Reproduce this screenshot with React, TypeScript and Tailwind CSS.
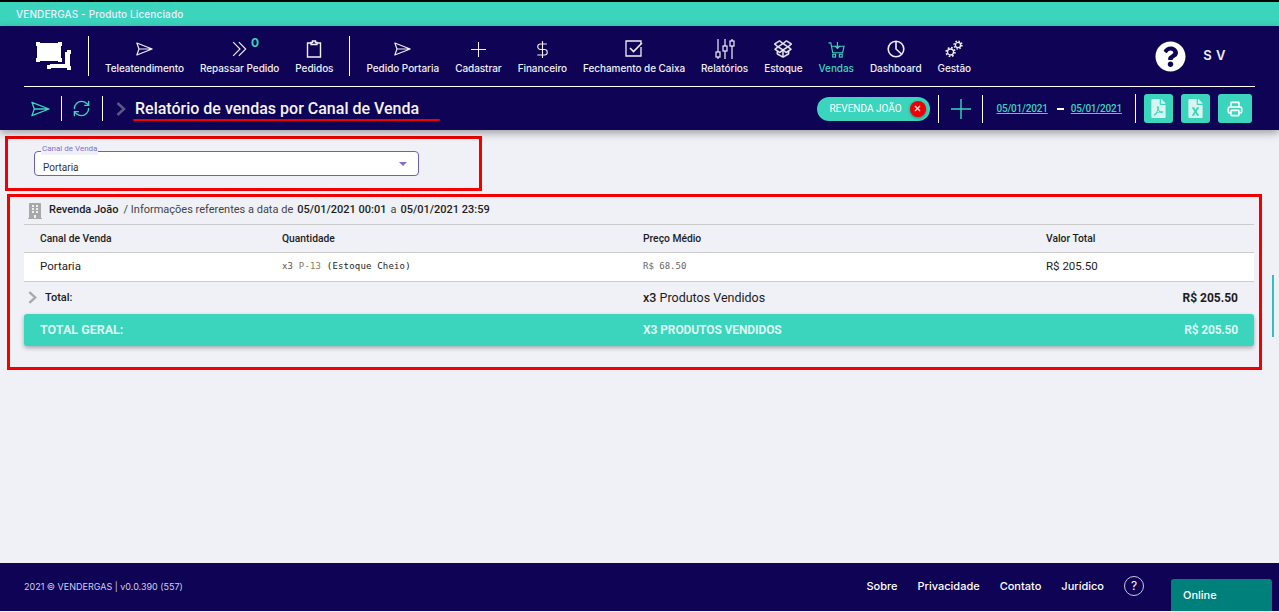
import { DollarSign, Printer, RefreshCw, X } from "lucide-react";
import type { ReactNode } from "react";
import { FaFileExcel, FaFilePdf, FaQuestionCircle, FaBuilding } from "react-icons/fa";
import { SlSocialDropbox } from "react-icons/sl";

function SendIcon({ className }: { className?: string }) {
  return (
    <svg viewBox="0 0 20 16" fill="none" stroke="currentColor" strokeWidth="1.4" className={className}>
      <path d="M1 1 L19 8 L1 15 L3.5 8 Z M3.5 8 H19" strokeLinejoin="round" />
    </svg>
  );
}

function Logo() {
  return (
    <svg viewBox="0 0 36 28" className="h-[28px] w-[36px] text-white" fill="currentColor">
      <rect x="1" y="1" width="24" height="18" />
      <rect x="0" y="0" width="4" height="4" />
      <rect x="22" y="0" width="4" height="4" />
      <rect x="0" y="16" width="4" height="4" />
      <rect x="22" y="16" width="4" height="4" />
      <path d="M14 22 H29 V10 H34 V26 H14 Z" />
      <rect x="31" y="8" width="4" height="4" />
      <rect x="31" y="24" width="4" height="4" />
      <rect x="11" y="23" width="4" height="4" />
    </svg>
  );
}

function ClipboardIcon() {
  return (
    <svg viewBox="0 0 16 18" fill="none" stroke="currentColor" strokeWidth="1.4" className="h-[18px] w-[16px]">
      <path d="M5 3 H1.5 V17 H14.5 V3 H11" />
      <path d="M5 4.5 V2.5 H6.5 V1 H9.5 V2.5 H11 V4.5 Z" />
    </svg>
  );
}

function ChevronsIcon() {
  return (
    <svg viewBox="0 0 14 14" fill="none" stroke="currentColor" strokeWidth="1" className="h-[16px] w-[16px]">
      <path d="M1 1 L7 7 L1 13 M6 1 L12 7 L6 13" />
    </svg>
  );
}

function PlusIcon({ className }: { className?: string }) {
  return (
    <svg viewBox="0 0 20 20" fill="none" stroke="currentColor" strokeWidth="1.4" className={className}>
      <path d="M10 0 V20 M0 10 H20" />
    </svg>
  );
}

function ArrowRightIcon({ className }: { className?: string }) {
  return (
    <svg viewBox="0 0 10 14" fill="none" stroke="currentColor" strokeWidth="2.6" className={className}>
      <path d="M1.5 1 L8 7 L1.5 13" />
    </svg>
  );
}

function CheckBox() {
  return (
    <svg viewBox="0 0 18 18" fill="none" stroke="currentColor" strokeWidth="1.3" className="h-[18px] w-[18px]">
      <path d="M16 4 V1 H1 V16 H16 V7" />
      <path d="M5 8 L8.5 11.5 L17 3" strokeWidth="1.6" />
    </svg>
  );
}

function SlidersIcon() {
  return (
    <svg viewBox="0 0 22 22" fill="none" stroke="currentColor" strokeWidth="1.2" className="h-[22px] w-[22px]">
      <path d="M4 1 V14 M4 19 V21 M11 1 V8 M11 13 V21 M18 1 V3 M18 8 V21" />
      <rect x="2" y="14" width="4" height="5" />
      <rect x="9" y="8" width="4" height="5" />
      <rect x="16" y="3" width="4" height="5" />
    </svg>
  );
}

function CartIcon() {
  return (
    <svg viewBox="0 0 18 18" fill="none" stroke="currentColor" strokeWidth="1.2" className="h-[17px] w-[17px]">
      <path d="M0.5 2 H3 L5 12.5 H15.5 L17 5.5 H4" />
      <path d="M10 1 V8 M7.5 5.5 L10 8 L12.5 5.5" />
      <rect x="5" y="14" width="3" height="3" />
      <rect x="12" y="14" width="3" height="3" />
    </svg>
  );
}

function PieIcon() {
  return (
    <svg viewBox="0 0 18 18" fill="none" stroke="currentColor" strokeWidth="1.6" className="h-[18px] w-[18px]">
      <circle cx="9" cy="9" r="7.8" />
      <path d="M9 1 V9 L15 14.5" />
    </svg>
  );
}

function CogsIcon() {
  return (
    <svg viewBox="0 0 18 18" fill="none" stroke="currentColor" className="h-[18px] w-[18px]">
      <circle cx="5.5" cy="12" r="3" strokeWidth="1.3" />
      <circle cx="5.5" cy="12" r="4.4" strokeWidth="1.6" strokeDasharray="1.7 1.76" />
      <circle cx="13" cy="5" r="2.6" strokeWidth="1.3" />
      <circle cx="13" cy="5" r="3.9" strokeWidth="1.5" strokeDasharray="1.5 1.56" />
    </svg>
  );
}

const NAV_LEFT: { label: string; icon: ReactNode }[] = [
  { label: "Teleatendimento", icon: <SendIcon className="h-[14px] w-[17px]" /> },
  { label: "Repassar Pedido", icon: <ChevronsIcon /> },
  { label: "Pedidos", icon: <ClipboardIcon /> },
];

const NAV_RIGHT: { label: string; icon: ReactNode; active?: boolean }[] = [
  { label: "Pedido Portaria", icon: <SendIcon className="h-[14px] w-[17px]" /> },
  { label: "Cadastrar", icon: <PlusIcon className="h-[15px] w-[15px]" /> },
  { label: "Financeiro", icon: <DollarSign className="h-[19px] w-[19px]" strokeWidth={1.4} /> },
  { label: "Fechamento de Caixa", icon: <CheckBox /> },
  { label: "Relatórios", icon: <SlidersIcon /> },
  { label: "Estoque", icon: <SlSocialDropbox className="h-[18px] w-[18px]" stroke="currentColor" strokeWidth={24} /> },
  { label: "Vendas", icon: <CartIcon />, active: true },
  { label: "Dashboard", icon: <PieIcon /> },
  { label: "Gestão", icon: <CogsIcon /> },
];

function NavItem({ label, icon, active, badge }: { label: string; icon: ReactNode; active?: boolean; badge?: string }) {
  return (
    <div className={`relative flex flex-col items-center gap-[2px] ${active ? "text-[#3bd4bc]" : "text-[#f0f0f8]"}`}>
      <div className="flex h-[22px] items-center justify-center">{icon}</div>
      <span className="whitespace-nowrap text-[10px] leading-[12px] font-medium tracking-[-0.06px]">{label}</span>
      {badge && (
        <span className="absolute top-[-1px] left-[51px] text-[12px] font-bold leading-[12px] text-[#3bd4bc]">{badge}</span>
      )}
    </div>
  );
}

const Divider = ({ className }: { className: string }) => <div className={`w-px bg-white ${className}`} />;

const TABLE_COLS = "grid grid-cols-[242px_361px_403px_1fr] items-center pl-4 pr-4";

export default function App() {
  return (
    <div className="relative flex h-[612px] w-[1279px] flex-col overflow-hidden bg-[#f0f1f7] font-['Roboto',sans-serif] text-[#1c1c1c]">
      <div className="h-[2px] bg-black" />
      <div className="flex h-[24px] items-center bg-[#3bd4bc] pl-4 font-['Inter',sans-serif] text-[10px] font-medium tracking-[0.13px] text-[#eef]">
        VENDERGAS - Produto Licenciado
      </div>

      {/* Header */}
      <header className="z-10 h-[104px] bg-[#0e0355] font-['Inter',sans-serif] shadow-[0_3px_8px_rgba(0,0,0,0.35)]">
        <div className="mx-6 flex h-[61px] items-center border-b border-white">
          <div className="ml-[12px] mr-4"><Logo /></div>
          <Divider className="h-[40px]" />
          <div className="ml-4 flex gap-4">
            {NAV_LEFT.map((n) => (
              <NavItem key={n.label} label={n.label} icon={n.icon} badge={n.label === "Repassar Pedido" ? "0" : undefined} />
            ))}
          </div>
          <Divider className="ml-4 h-[40px]" />
          <div className="ml-4 flex gap-4">
            {NAV_RIGHT.map((n) => (
              <NavItem key={n.label} {...n} />
            ))}
          </div>
          <FaQuestionCircle className="ml-auto h-[31px] w-[31px] text-white" />
          <span className="ml-[17px] mr-[29px] text-[13px] font-semibold tracking-[0.5px] text-[#f0f0f8]">S V</span>
        </div>

        <div className="relative mx-6 flex h-[43px] items-center">
          <SendIcon className="ml-[7px] h-[16px] w-[19px] text-[#3bd4bc]" />
          <Divider className="ml-[11px] h-[25px]" />
          <RefreshCw className="ml-[10px] h-[19px] w-[19px] text-[#3bd4bc]" strokeWidth={1.7} />
          <Divider className="ml-[11px] h-[25px]" />
          <ArrowRightIcon className="ml-[13px] h-[14px] w-[10px] text-[#5d5688]" />
          <h1 className="ml-[9px] font-['Roboto',sans-serif] text-[16px] font-medium text-[#f4f4fa]">
            Relatório de vendas por Canal de Venda
          </h1>
          <div className="absolute left-[109px] top-[32px] h-[2px] w-[307px] rounded-full bg-[#f00000]" />

          <div className="ml-auto flex items-center">
            <div className="flex h-[24px] w-[113px] items-center rounded-full bg-[#3bd4bc] pl-3 font-['Roboto',sans-serif] text-[10px] text-white">
              REVENDA JOÃO
              <span className="ml-[8px] flex h-4 w-4 items-center justify-center rounded-full bg-[#f00000] shadow-[0_1px_3px_rgba(0,0,0,0.4)]">
                <X className="h-[9px] w-[9px]" strokeWidth={3} />
              </span>
            </div>
            <Divider className="ml-2 h-[28px]" />
            <PlusIcon className="ml-3 h-[20px] w-[20px] text-[#3bd4bc]" />
            <Divider className="ml-[11px] h-[28px]" />
            <span className="ml-[13px] font-['Roboto',sans-serif] text-[10px] font-medium tracking-[-0.2px] text-[#3bd4bc] underline">05/01/2021</span>
            <span className="ml-[9px] mr-[7px] h-[2px] w-[7px] bg-white" />
            <span className="font-['Roboto',sans-serif] text-[10px] font-medium tracking-[-0.2px] text-[#3bd4bc] underline">05/01/2021</span>
            <Divider className="ml-[13px] h-[29px]" />
            <div className="ml-2 flex h-[29px] w-[29px] items-center justify-center rounded-[3px] bg-[#3bd4bc]">
              <FaFilePdf className="h-[19px] w-[15px] text-[#d8f6f0]" />
            </div>
            <div className="ml-2 flex h-[29px] w-[29px] items-center justify-center rounded-[3px] bg-[#3bd4bc]">
              <FaFileExcel className="h-[19px] w-[15px] text-[#d8f6f0]" />
            </div>
            <div className="ml-2 mr-[3px] flex h-[29px] w-[34px] items-center justify-center rounded-[3px] bg-[#3bd4bc]">
              <Printer className="h-[16px] w-[16px] text-white" strokeWidth={2.4} />
            </div>
          </div>
        </div>
      </header>

      {/* Content */}
      <main className="flex-1 pt-[6px]">
        <div className="ml-[5px] h-[55px] w-[477px] border-[3px] border-[#f00000] pl-[26px] pt-3">
          <div className="relative flex h-[25px] w-[385px] items-center justify-between rounded-[4px] border border-[#6a5fc8] bg-white pl-2 pr-[11px] text-[10px] text-[#333]">
            <span className="absolute left-[6px] top-[-9px] bg-[#f0f1f7] px-px text-[8px] leading-[12px] text-[#7b6fd6]">Canal de Venda</span>
            <span className="pt-[7px]">Portaria</span>
            <span className="h-0 w-0 border-x-[4px] border-t-[4px] border-x-transparent border-t-[#7b70cc]" />
          </div>
        </div>

        <div className="ml-[7px] mt-[3px] h-[176px] w-[1255px] border-[3px] border-[#f00000] pl-[14px] pr-[5px]">
          <div className="flex h-[28px] items-center border-b border-[#ccc] text-[11px]">
            <FaBuilding className="ml-1 h-[16px] w-[14px] text-[#a8a8a8]" />
            <span className="ml-[7px] font-medium">Revenda João</span>
            <span className="ml-[5px] text-[#444]">/ Informações referentes a data de</span>
            <span className="ml-1 font-medium">05/01/2021 00:01</span>
            <span className="ml-1 text-[#444]">a</span>
            <span className="ml-1 font-medium">05/01/2021 23:59</span>
          </div>
          <div className={`${TABLE_COLS} h-[28px] border-b border-[#ccc] text-[10.3px] font-medium`}>
            <span>Canal de Venda</span>
            <span>Quantidade</span>
            <span>Preço Médio</span>
            <span>Valor Total</span>
          </div>
          <div className={`${TABLE_COLS} h-[29px] border-b border-[#ccc] bg-white text-[11.5px]`}>
            <span>Portaria</span>
            <span className="font-['DejaVu_Sans_Mono',monospace] text-[9px] tracking-[0.18px]">
              <span className="text-[#555]">x3</span> <span className="text-[#8a7a5a]">P-13</span> (Estoque Cheio)
            </span>
            <span className="font-['DejaVu_Sans_Mono',monospace] text-[9px] text-[#666]">R$ 68.50</span>
            <span>R$ 205.50</span>
          </div>
          <div className={`${TABLE_COLS} relative h-[32px]`}>
            <ArrowRightIcon className="absolute left-[4px] top-[9px] h-[13px] w-[9px] text-[#a8a8a8]" />
            <span className="pl-[5px] text-[11px] font-medium">Total:</span>
            <span />
            <span className="text-[12.5px]"><b className="font-medium">x3</b> Produtos Vendidos</span>
            <span className="text-right text-[12px] font-bold">R$ 205.50</span>
          </div>
          <div className={`${TABLE_COLS} h-[32px] rounded-[3px] bg-[#3bd4bc] font-bold text-[#dcf8f2] shadow-[0_2px_4px_rgba(0,0,0,0.3)]`}>
            <span className="text-[12.5px]">TOTAL GERAL:</span>
            <span />
            <span className="text-[12px] tracking-[-0.1px]">X3 PRODUTOS VENDIDOS</span>
            <span className="text-right text-[12px] tracking-[-0.2px]">R$ 205.50</span>
          </div>
        </div>
      </main>

      {/* Footer */}
      <footer className="mb-px flex h-[48px] items-center bg-[#0e0355] pl-6 font-['Inter',sans-serif] text-white">
        <span className="text-[9px] text-[#d0d0e8]">2021 © VENDERGAS | v0.0.390 (557)</span>
        <nav className="mb-[2px] ml-auto flex items-center gap-5 text-[11px] font-medium">
          <span>Sobre</span>
          <span>Privacidade</span>
          <span>Contato</span>
          <span>Jurídico</span>
          <span className="flex h-[20px] w-[20px] items-center justify-center rounded-full border border-[#c8c8e8] text-[12px] font-normal">?</span>
        </nav>
        <div className="ml-[27px] mr-[7px] mt-auto flex h-[32px] w-[101px] items-center rounded-t-[3px] bg-[#00807a] pl-3 text-[11px] font-medium">
          Online
        </div>
      </footer>

      <div className="absolute left-[1272px] top-[275px] h-[62px] w-[2px] bg-[#3bb8c8]" />
    </div>
  );
}
